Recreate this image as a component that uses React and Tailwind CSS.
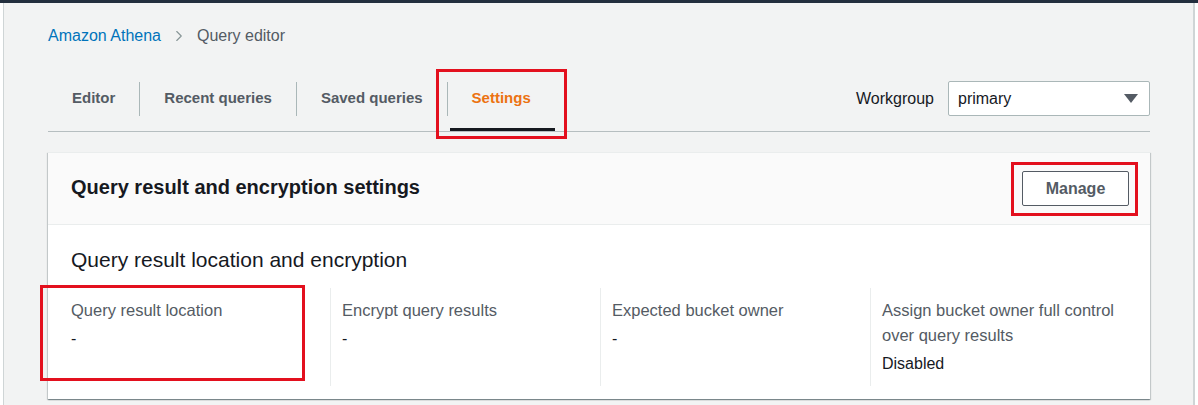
import { ChevronRight } from 'lucide-react';

const font = { fontFamily: '"Liberation Sans", Arial, sans-serif' };

const tabs = ['Editor', 'Recent queries', 'Saved queries', 'Settings'];

const columns = [
  { label: 'Query result location', value: '-' },
  { label: 'Encrypt query results', value: '-' },
  { label: 'Expected bucket owner', value: '-' },
  { label: 'Assign bucket owner full control over query results', value: 'Disabled' },
];

const Tabs = () => (
  <div className="flex items-center">
    {tabs.map((t, i) => (
      <div key={t} className="flex items-center">
        {i > 0 && <div className="w-px h-[34px] bg-[#aab7b8]" />}
        <div
          className={`relative h-[65px] flex items-center px-6 text-[15px] font-bold ${
            t === 'Settings' ? 'text-[#ec7211]' : 'text-[#545b64]'
          }`}
        >
          {t}
          {t === 'Settings' && (
            <>
              <div className="absolute left-[2px] right-0 bottom-0 h-[3px] bg-[#16191f]" />
              {/* annotation */}
              <div className="absolute -left-[12px] -right-[12px] top-[3px] bottom-[-8px] border-[3px] border-[#e3101e]" />
            </>
          )}
        </div>
      </div>
    ))}
  </div>
);

export default function App() {
  return (
    <div className="w-[1198px] h-[405px] overflow-hidden bg-white" style={font}>
      <div className="h-[3px] bg-[#232f3e]" />
      <div className="h-[402px] mx-[3px] border-l border-r-2 border-[#cfd5d6] bg-[#f2f3f3] pl-[44px] pr-[43px] pt-[21px]">
        {/* Breadcrumb */}
        <div className="flex items-center h-[24px] text-[16px] leading-6">
          <span className="text-[#0073bb]">Amazon Athena</span>
          <ChevronRight size={18} strokeWidth={1.5} className="text-[#879596] mx-[9px]" />
          <span className="text-[#545b64]">Query editor</span>
        </div>

        {/* Tabs + workgroup */}
        <div className="mt-[18px] flex items-center justify-between border-b border-[#b6bec0]">
          <Tabs />
          <div className="flex items-center gap-[14px] text-[16px]">
            <span className="text-[#16191f]">Workgroup</span>
            <div className="w-[202px] h-[35px] bg-white border border-[#aab7b8] rounded-[2px] flex items-center justify-between pl-[9px] pr-[11px]">
              <span className="text-[#16191f]">primary</span>
              <svg width="14" height="9" viewBox="0 0 14 9">
                <polygon points="0,0 14,0 7,9" fill="#545b64" />
              </svg>
            </div>
          </div>
        </div>

        {/* Card */}
        <div className="mt-[20px] bg-white border-t border-[#eaeded] shadow-[0_1px_1px_0_rgba(0,28,36,0.3),1px_1px_1px_0_rgba(0,28,36,0.15),-1px_1px_1px_0_rgba(0,28,36,0.15)]">
          <div className="h-[72px] bg-[#fafafa] border-b border-[#eaeded] flex items-center justify-between pl-[23px] pr-[21px]">
            <h2 className="text-[20px] font-bold text-[#16191f] -mt-[3px]">Query result and encryption settings</h2>
            <div className="relative">
              <button className="w-[107px] h-[35px] bg-white border border-[#545b64] rounded-[2px] text-[16px] font-bold text-[#545b64]">
                Manage
              </button>
              <div className="absolute -left-[11px] -right-[9px] -top-[9px] -bottom-[10px] border-[3px] border-[#e3101e]" />
            </div>
          </div>

          <div className="pl-[23px] pr-[20px] pt-[23px] pb-[13px]">
            <h3 className="text-[21px] leading-6 text-[#16191f]">Query result location and encryption</h3>
            <div className="mt-[16px] grid grid-cols-[259px_270px_270px_1fr]">
              {columns.map((c, i) => (
                <div
                  key={c.label}
                  className={`relative pt-[10px] pb-[10px] ${i > 0 ? 'border-l border-[#eaeded] pl-[11px]' : ''}`}
                >
                  <div className="text-[16.5px] leading-[25px] text-[#545b64] max-w-[245px]">{c.label}</div>
                  <div className="mt-[4px] text-[16px] leading-6 text-[#16191f]">{c.value}</div>
                  {i === 0 && (
                    <div className="absolute -left-[31px] right-[25px] -top-[3px] bottom-[5px] border-[3px] border-[#e3101e]" />
                  )}
                </div>
              ))}
            </div>
          </div>
        </div>
      </div>
    </div>
  );
}
